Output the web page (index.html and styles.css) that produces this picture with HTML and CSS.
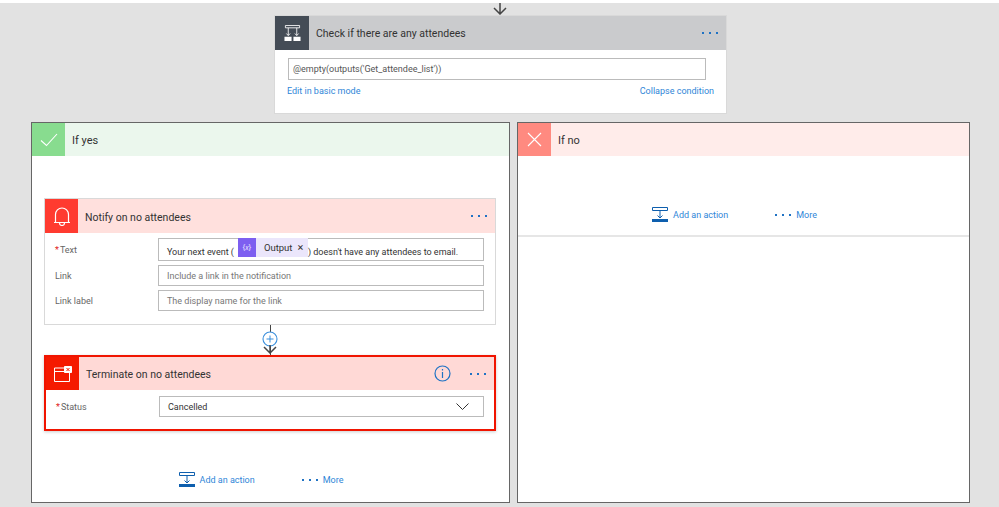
FILE: index.html
```html
<!doctype html>
<html>

<head>
<meta charset="utf-8" />
<title>Check if there are any attendees</title>
<link rel="stylesheet" href="styles.css">
</head>

<body>

<div class="canvas">
	<svg class="top-arrow" width="16" height="12" viewBox="0 0 16 12"><path d="M8 0v11M2 5l6 6 6-6" fill="none" stroke="#444" stroke-width="1.500"/></svg>

	<section class="card check">
		<header class="card-head head-grey">
			<span class="card-icon icon-slate">
				<svg width="17" height="17" viewBox="0 0 18 18"><path d="M1.500 .5h15v2.500h-15zM4.500 3v8M13.500 3v8M2.500 9l2 2.200 2-2.200M11.500 9l2 2.200 2-2.200" fill="none" stroke="#fff" stroke-width=".9"/><path d="M.5 12.500h7.500V17H.5zM10 12.500h7.500V17H10z" fill="#fff"/></svg>
			</span>
			<h2>Check if there are any attendees</h2>
			<span class="dots"></span>
		</header>
		<div class="check-body">
			<div class="field check-field">@empty(outputs('Get_attendee_list'))</div>
			<div class="check-links">
				<a href="#">Edit in basic mode</a>
				<a href="#">Collapse condition</a>
			</div>
		</div>
	</section>

	<div class="branches">
		<section class="branch branch-yes">
			<header class="branch-head head-yes">
				<span class="branch-icon icon-yes">
					<svg width="18" height="14" viewBox="0 0 18 14"><path d="M1 7.500l5.500 5L17 1" fill="none" stroke="#fff" stroke-width="1.100"/></svg>
				</span>
				<h3>If yes</h3>
			</header>
			<div class="branch-body">
				<section class="card notify">
					<header class="card-head head-red">
						<span class="card-icon icon-red">
							<svg width="18" height="19" viewBox="0 0 18 19"><path d="M1 15.500h16M2.500 15.500V7.500a6.500 6.500 0 0 1 13 0v8M6.500 16a2.500 2.500 0 0 0 5 0" fill="none" stroke="#fff" stroke-width="1.200"/></svg>
						</span>
						<h2>Notify on no attendees</h2>
						<span class="dots"></span>
					</header>
					<div class="card-form">
						<div class="row">
							<label><i>*</i>Text</label>
							<div class="field field-text">
								<span class="run">Your next event (</span>
								<span class="token">
									<span class="token-icon">{<em>x</em>}</span>
									<span class="token-name">Output</span>
									<span class="token-x">&times;</span>
								</span>
								<span class="run">) doesn't have any attendees to email.</span>
							</div>
						</div>
						<div class="row">
							<label>Link</label>
							<div class="field hint">Include a link in the notification</div>
						</div>
						<div class="row">
							<label>Link label</label>
							<div class="field hint">The display name for the link</div>
						</div>
					</div>
				</section>

				<div class="connector">
					<span class="line"></span>
					<span class="plus">
						<svg width="16" height="16" viewBox="0 0 16 16"><circle cx="8" cy="8" r="7" fill="#fff" stroke="#3a8fdc" stroke-width="1.100"/><path d="M8 4.500v7M4.500 8h7" stroke="#3a8fdc"/></svg>
					</span>
					<svg class="arrow" width="16" height="9" viewBox="0 0 16 9"><path d="M8 0v8M2 2l6 6 6-6" fill="none" stroke="#444" stroke-width="1.500"/></svg>
				</div>

				<section class="card terminate">
					<header class="card-head head-term">
						<span class="card-icon icon-term">
							<svg width="18" height="16" viewBox="0 0 18 16"><path d="M11 2H.5v13.500h15V7M.5 5.500H11" fill="none" stroke="#fff"/><path d="M10.500.5h7v6h-7z" fill="#fff" stroke="#fff"/><path d="M12.500 2l3 3M15.500 2l-3 3" stroke="#f51a00"/></svg>
						</span>
						<h2>Terminate on no attendees</h2>
						<svg class="info" width="17" height="17" viewBox="0 0 17 17"><circle cx="8.500" cy="8.500" r="7.500" fill="none" stroke="#1f72c4" stroke-width="1.200"/><path d="M8.500 7v6M8.500 4v1.500" stroke="#1f72c4" stroke-width="1.200"/></svg>
						<span class="dots"></span>
					</header>
					<div class="card-form">
						<div class="row">
							<label><i>*</i>Status</label>
							<div class="field field-select">
								Cancelled
								<svg width="13" height="7" viewBox="0 0 13 7"><path d="M.5.500l6 6 6-6" fill="none" stroke="#333"/></svg>
							</div>
						</div>
					</div>
				</section>

				<div class="actions actions-yes">
					<a href="#" class="add-action">
						<svg width="16" height="15" viewBox="0 0 16 15"><path d="M.5.500h15v3H.500zM8 3.500v7.500M5.500 8.500L8 11l2.500-2.500" fill="none" stroke="#0e5fae"/><path d="M0 12h16v3H0z" fill="#0e5fae"/></svg>
						Add an action
					</a>
					<a href="#" class="more"><span class="dots"></span>More</a>
				</div>
			</div>
		</section>

		<section class="branch branch-no">
			<header class="branch-head head-no">
				<span class="branch-icon icon-no">
					<svg width="15" height="15" viewBox="0 0 15 15"><path d="M1 1l13 13M14 1L1 14" stroke="#fff" stroke-width="1.100"/></svg>
				</span>
				<h3>If no</h3>
			</header>
			<div class="no-body">
				<div class="actions">
					<a href="#" class="add-action">
						<svg width="16" height="15" viewBox="0 0 16 15"><path d="M.5.500h15v3H.500zM8 3.500v7.500M5.500 8.500L8 11l2.500-2.500" fill="none" stroke="#0e5fae"/><path d="M0 12h16v3H0z" fill="#0e5fae"/></svg>
						Add an action
					</a>
					<a href="#" class="more"><span class="dots"></span>More</a>
				</div>
			</div>
		</section>
	</div>
</div>

</body>

</html>
```

FILE: styles.css
```css
* {
	margin: 0;
	padding: 0;
	box-sizing: border-box;
}
html, body {
	width: 100%;
	height: 100%;
	overflow: hidden;
}
body {
	background: #fff;
	font-family: Roboto, "Liberation Sans", sans-serif;
	font-size: 9px;
	color: #333;
}
a {
	color: #2f86d8;
	text-decoration: none;
}
h2, h3 {
	font-weight: 400;
	font-size: 10.5px;
	color: #333;
}
.canvas {
	margin-top: 3px;
	height: 504px;
	background: #e2e2e2;
	display: flex;
	flex-direction: column;
	align-items: flex-start;
}
.top-arrow {
	display: block;
	margin-left: 492px;
}
.card {
	background: #fff;
	border: 1px solid #d9d9d9;
}
.card-head {
	height: 34px;
	display: flex;
	align-items: center;
}
.card-head h2 {
	flex: 1;
	margin-left: 7px;
	padding-top: 1px;
}
.notify .card-head h2 {
	padding-top: 3px;
}
.card-icon {
	width: 34px;
	height: 34px;
	flex: none;
	display: flex;
	align-items: center;
	justify-content: center;
}
.dots {
	display: block;
	flex: none;
	width: 16px;
	height: 2px;
	background: repeating-linear-gradient(90deg, #1f72c4 0 2px, transparent 2px 7px);
}
.card-head .dots {
	margin-right: 8px;
}
.check {
	width: 453px;
	height: 99px;
	margin-left: 274px;
}
.head-grey { background: #cacbcd; }
.icon-slate { background: #444c56; }
.check-body {
	padding: 8px 12px 0 13px;
}
.field {
	background: #fff;
	border: 1px solid #bbb;
	height: 21px;
	padding-left: 8px;
	display: flex;
	align-items: center;
	color: #333;
}
.check-field {
	width: 418px;
	height: 22px;
	padding-left: 4px;
	color: #555;
}
.check-links {
	display: flex;
	justify-content: space-between;
	margin: 4px 0 0 -1px;
	line-height: 14px;
}
.branches {
	display: flex;
	gap: 6px;
	margin-top: 8px;
	margin-left: 31px;
}
.branch {
	background: #fff;
	border: 1px solid #666;
	height: 381px;
}
.branch-yes { width: 479px; }
.branch-no {
	width: 453px;
	margin-left: 1px;
}
.branch-head {
	height: 33px;
	display: flex;
	align-items: center;
}
.branch-head h3 {
	margin-left: 7px;
	padding-top: 2px;
	font-size: 11px;
}
.branch-icon {
	width: 33px;
	height: 33px;
	display: flex;
	align-items: center;
	justify-content: center;
}
.head-yes { background: #ebf7ed; }
.icon-yes { background: #88dc8f; }
.head-no { background: #ffecea; }
.icon-no { background: #ff8a80; }
.branch-body {
	padding: 42px 13px 0 12px;
}
.head-red { background: #ffe0dd; }
.icon-red {
	width: 33px;
	background: #ff3b30;
}
.notify {
	height: 127px;
}
.card-form {
	padding: 5px 11px 0 10px;
}
.row {
	display: flex;
	align-items: center;
	margin-bottom: 4px;
}
.row label {
	width: 103px;
	flex: none;
	color: #666;
}
.row label i {
	color: #e02020;
	font-style: normal;
	margin-right: 1px;
}
.row .field {
	flex: 1;
	min-width: 0;
}
.field-text {
	height: 23px;
	white-space: pre;
}
.row .field-text {
	flex: 1 0 auto;
	height: 23px;
}
.field-text .run {
	flex: none;
	margin-top: 4px;
}
.token {
	display: flex;
	align-items: center;
	align-self: flex-start;
	flex: none;
	height: 19px;
	width: 70px;
	margin: -1px 0 0 4px;
	background: #ebe6fb;
}
.token-icon {
	width: 18px;
	height: 19px;
	background: #7d5ff0;
	color: #e8e2ff;
	font-size: 8px;
	text-align: center;
	line-height: 19px;
}
.token-icon em {
	font-size: 7px;
}
.token-name {
	margin-left: 8px;
	font-size: 9.5px;
}
.token-x {
	font-size: 11px;
	line-height: 11px;
	margin-left: 5px;
}
.hint {
	color: #777;
}
.connector {
	height: 30px;
	width: 16px;
	margin-left: 218px;
	display: flex;
	flex-direction: column;
	align-items: center;
	position: relative;
}
.connector .line {
	width: 1px;
	height: 100%;
	background: #444;
}
.plus {
	position: absolute;
	top: 6px;
	left: 0;
	height: 16px;
}
.connector .arrow {
	position: absolute;
	bottom: 1px;
	left: 0;
}
.terminate {
	height: 76px;
	border: 2px solid #f01400;
	box-shadow: 0 1px 3px rgba(0, 0, 0, .2);
}
.terminate .card-head {
	height: 33px;
}
.head-term { background: #ffd9d6; }
.icon-term {
	width: 33px;
	height: 33px;
	background: #f51a00;
}
.info {
	margin-right: 19px;
}
.terminate .card-form {
	padding: 6px 10px 0;
}
.field-select {
	justify-content: space-between;
	padding-right: 14px;
}
.actions {
	display: flex;
	justify-content: center;
	align-items: center;
	gap: 47px;
	padding-right: 18px;
}
.actions-yes {
	margin-top: 41px;
}
.add-action {
	display: flex;
	align-items: center;
	gap: 5px;
}
.more {
	display: flex;
	align-items: center;
	gap: 5px;
}
.no-body {
	height: 81px;
	padding-top: 51px;
	border-bottom: 2px solid #e6e6e6;
}
```
